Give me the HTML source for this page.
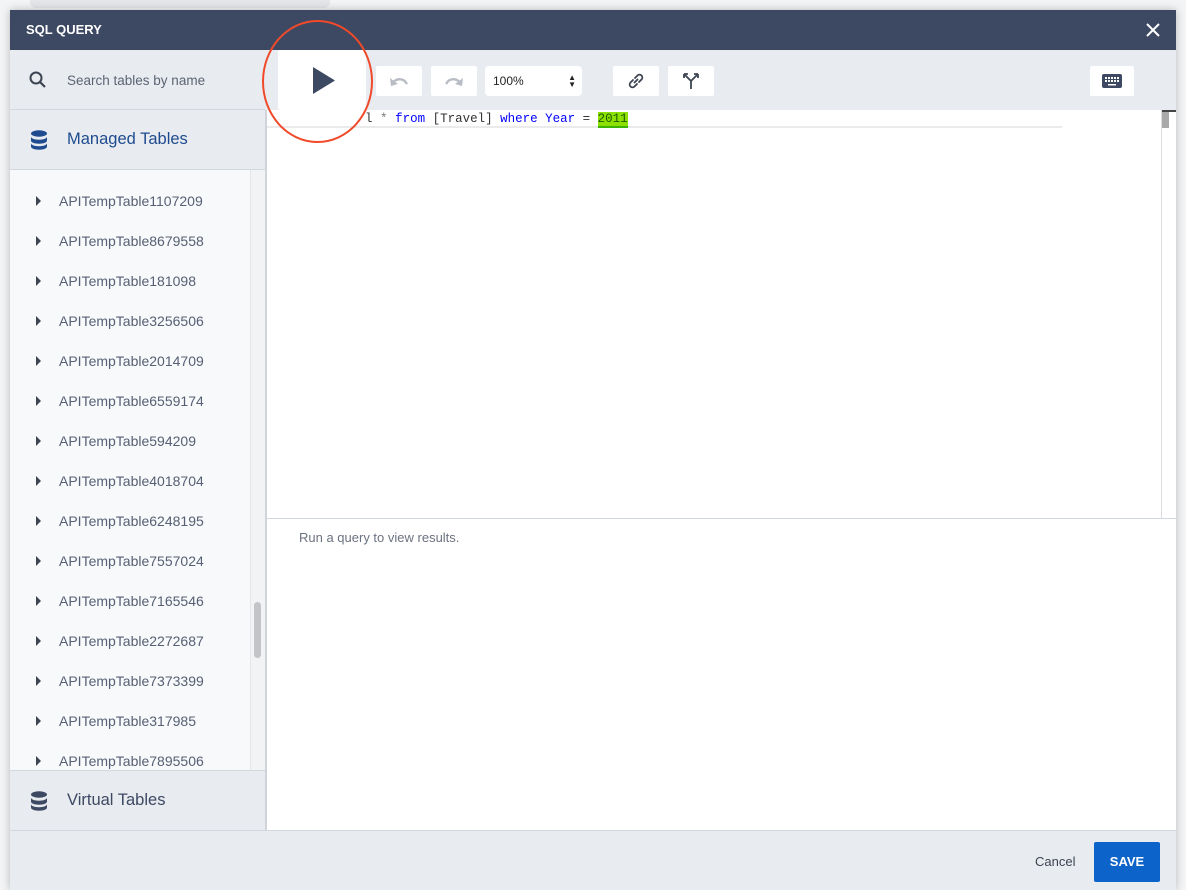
<!DOCTYPE html>
<html><head><style>
*{box-sizing:border-box;margin:0;padding:0}
body{width:1186px;height:890px;overflow:hidden;background:#f3f4f6;font-family:"Liberation Sans",sans-serif;position:relative}
.bg1{position:absolute;left:30px;top:0;width:300px;height:8px;background:#e4e6ea;border-radius:0 0 6px 6px}
.modal{position:absolute;left:10px;top:10px;width:1166px;height:880px;background:#e8ebef;box-shadow:0 0 8px rgba(0,0,0,.25)}
.hdr{position:absolute;left:0;top:0;width:100%;height:40px;background:#3d4863;color:#fff;font-size:13px;font-weight:bold;line-height:40px;padding-left:16px}
.x{position:absolute;right:14px;top:11px}
.left{position:absolute;left:0;top:40px;width:255px;height:780px}
.search{height:60px;border-bottom:1px solid #d3d7de;position:relative}
.search span{position:absolute;left:57px;top:23px;font-size:13.5px;color:#5c6474}
.mt{height:60px;border-bottom:1px solid #d3d7de;position:relative}
.mt span{position:absolute;left:57px;top:20px;font-size:16.5px;color:#1e4b8f}
.list{position:absolute;left:0;top:160px;width:240px;height:600px;background:#f8f9fa;overflow:hidden}
.item{height:40px;position:relative;font-size:14px;color:#566074}
.item span{position:absolute;left:49px;top:23px}
.item i{position:absolute;left:26px;top:26px;width:0;height:0;border-left:5px solid #3d4553;border-top:5px solid transparent;border-bottom:5px solid transparent}
.sb{position:absolute;left:240px;top:160px;width:15px;height:600px;background:#f2f3f5;border-left:1px solid #e4e6ea}
.sb div{position:absolute;left:3px;top:432px;width:7px;height:56px;background:#c2c4c8;border-radius:4px}
.vt{position:absolute;left:0;top:760px;width:255px;height:60px;border-top:1px solid #d3d7de;background:#e8ebef}
.vt span{position:absolute;left:57px;top:20px;font-size:16.5px;color:#3d4863}
.divider{position:absolute;left:255px;top:100px;width:2px;height:720px;background:#d0d4da}
.editor{position:absolute;left:257px;top:100px;width:909px;height:408px;background:#fff}
.res{position:absolute;left:257px;top:508px;width:909px;height:312px;background:#fff;border-top:1px solid #d3d7de}
.res span{position:absolute;left:32px;top:11px;font-size:13px;color:#6b7280}
.btn{position:absolute;top:16px;height:30px;background:#fff;border-radius:2px}
.code{position:absolute;left:98px;top:1px;font-family:"Liberation Mono",monospace;font-size:12.5px;color:#333;white-space:pre;line-height:16px}
.kw{color:#0000ff}
.foot{position:absolute;left:0;top:820px;width:100%;height:60px;border-top:1px solid #d3d7de}
</style></head><body>
<div class="bg1"></div>
<div class="modal">
<div class="hdr">SQL QUERY
<svg class="x" width="18" height="18" viewBox="0 0 18 18"><path d="M3 3L15 15M15 3L3 15" stroke="#fff" stroke-width="2"/></svg></div>
<div class="left">
<div class="search"><svg style="position:absolute;left:19px;top:21px" width="18" height="18" viewBox="0 0 18 18"><circle cx="7" cy="7" r="5.5" stroke="#3d4553" stroke-width="2" fill="none"/><path d="M11 11L16 16" stroke="#3d4553" stroke-width="2.2"/></svg><span>Search tables by name</span></div>
<div class="mt"><svg style="position:absolute;left:20px;top:20px" width="18" height="20" viewBox="0 0 18 20"><ellipse cx="9" cy="3.5" rx="8" ry="3.2" fill="#1e4b8f"/><path d="M1 6.5c0 2 3.6 3.2 8 3.2s8-1.2 8-3.2v4c0 2-3.6 3.2-8 3.2s-8-1.2-8-3.2z M1 13c0 2 3.6 3.2 8 3.2s8-1.2 8-3.2v3.5c0 2-3.6 3.2-8 3.2s-8-1.2-8-3.2z" fill="#1e4b8f"/></svg><span>Managed Tables</span></div>
</div>
<div class="list">
<div class="item"><i></i><span>APITempTable1107209</span></div>
<div class="item"><i></i><span>APITempTable8679558</span></div>
<div class="item"><i></i><span>APITempTable181098</span></div>
<div class="item"><i></i><span>APITempTable3256506</span></div>
<div class="item"><i></i><span>APITempTable2014709</span></div>
<div class="item"><i></i><span>APITempTable6559174</span></div>
<div class="item"><i></i><span>APITempTable594209</span></div>
<div class="item"><i></i><span>APITempTable4018704</span></div>
<div class="item"><i></i><span>APITempTable6248195</span></div>
<div class="item"><i></i><span>APITempTable7557024</span></div>
<div class="item"><i></i><span>APITempTable7165546</span></div>
<div class="item"><i></i><span>APITempTable2272687</span></div>
<div class="item"><i></i><span>APITempTable7373399</span></div>
<div class="item"><i></i><span>APITempTable317985</span></div>
<div class="item"><i></i><span>APITempTable7895506</span></div>
</div>
<div class="sb"><div></div></div>
<div class="vt"><svg style="position:absolute;left:20px;top:20px" width="18" height="20" viewBox="0 0 18 20"><ellipse cx="9" cy="3.5" rx="8" ry="3.2" fill="#3d4863"/><path d="M1 6.5c0 2 3.6 3.2 8 3.2s8-1.2 8-3.2v4c0 2-3.6 3.2-8 3.2s-8-1.2-8-3.2z M1 13c0 2 3.6 3.2 8 3.2s8-1.2 8-3.2v3.5c0 2-3.6 3.2-8 3.2s-8-1.2-8-3.2z" fill="#3d4863"/></svg><span>Virtual Tables</span></div>
<div class="divider"></div>
<div class="editor">
<div style="position:absolute;left:0;top:16px;width:795px;height:2px;background:#ebebeb"></div>
<div class="code"><span style="color:#333">l</span> <span style="color:#777">*</span> <span class="kw">from</span> [Travel] <span class="kw">where</span> <span class="kw">Year</span> = <span style="background:#8ee000;color:#1a5d00;border-bottom:2px solid #3bb300">2011</span></div>
<div style="position:absolute;right:14px;top:0;width:1px;height:408px;background:#ddd"></div>
<div style="position:absolute;right:0;top:0;width:14px;height:408px;background:#fff"><div style="position:absolute;left:0;top:2px;width:7px;height:16px;background:#a9a9a9"></div><div style="position:absolute;left:0;top:0;width:14px;height:2px;background:#444"></div></div>
</div>
<div class="res"><span>Run a query to view results.</span></div>
<div class="btn" style="left:268px;top:40px;width:88px;height:60px"><svg style="position:absolute;left:34px;top:17px" width="24" height="27" viewBox="0 0 24 27"><path d="M1 0L23 13.5L1 27Z" fill="#3d4863"/></svg></div>
<div class="btn" style="left:366px;top:56px;width:46px"><svg style="position:absolute;left:13px;top:8px" width="20" height="14" viewBox="0 0 20 14"><path d="M3 11C5 4 14 3 18 10" stroke="#b8bcc4" stroke-width="2.4" fill="none"/><path d="M1 4L2 12L9 10Z" fill="#b8bcc4"/></svg></div>
<div class="btn" style="left:421px;top:56px;width:46px"><svg style="position:absolute;left:13px;top:8px" width="20" height="14" viewBox="0 0 20 14"><path d="M17 11C15 4 6 3 2 10" stroke="#b8bcc4" stroke-width="2.4" fill="none"/><path d="M19 4L18 12L11 10Z" fill="#b8bcc4"/></svg></div>
<div class="btn" style="left:475px;top:56px;width:97px;font-size:12px;line-height:30px;padding-left:8px;color:#222;border-radius:4px">100%<span style="position:absolute;right:6px;top:0;font-size:8px;line-height:7px;padding-top:8px">▲<br>▼</span></div>
<div class="btn" style="left:603px;top:56px;width:46px"><svg style="position:absolute;left:13px;top:5px" width="20" height="20" viewBox="0 0 20 20"><path d="M8.5 11.5L11.5 8.5M7 9L4.5 11.5a2.8 2.8 0 0 0 4 4L11 13M13 11L15.5 8.5a2.8 2.8 0 0 0-4-4L9 7" stroke="#3d4553" stroke-width="1.8" fill="none" stroke-linecap="round"/></svg></div>
<div class="btn" style="left:658px;top:56px;width:46px"><svg style="position:absolute;left:13px;top:5px" width="20" height="20" viewBox="0 0 20 20"><path d="M10 18V10L4 4M10 10L16 4M3 3h4M3 3v4M17 3h-4M17 3v4" stroke="#3d4553" stroke-width="1.8" fill="none"/></svg></div>
<div class="btn" style="left:1080px;top:56px;width:44px"><svg style="position:absolute;left:12px;top:8px" width="20" height="14" viewBox="0 0 20 14"><rect x="0" y="0" width="20" height="14" rx="2" fill="#3d4863"/><g fill="#fff"><rect x="3" y="3" width="2" height="2"/><rect x="6" y="3" width="2" height="2"/><rect x="9" y="3" width="2" height="2"/><rect x="12" y="3" width="2" height="2"/><rect x="15" y="3" width="2" height="2"/><rect x="3" y="6" width="2" height="2"/><rect x="6" y="6" width="2" height="2"/><rect x="9" y="6" width="2" height="2"/><rect x="12" y="6" width="2" height="2"/><rect x="15" y="6" width="2" height="2"/><rect x="6" y="10" width="8" height="1.5"/></g></svg></div>
<div class="foot">
<span style="position:absolute;left:1025px;top:23px;font-size:13px;color:#3d4553">Cancel</span>
<div style="position:absolute;left:1084px;top:11px;width:66px;height:40px;background:#0c63c9;border-radius:2px;color:#fff;font-weight:bold;font-size:13px;text-align:center;line-height:40px">SAVE</div>
</div>
</div>
<div style="position:absolute;left:262px;top:20px;width:111px;height:123px;border:2px solid #f04a2a;border-radius:50%"></div>
</body></html>
